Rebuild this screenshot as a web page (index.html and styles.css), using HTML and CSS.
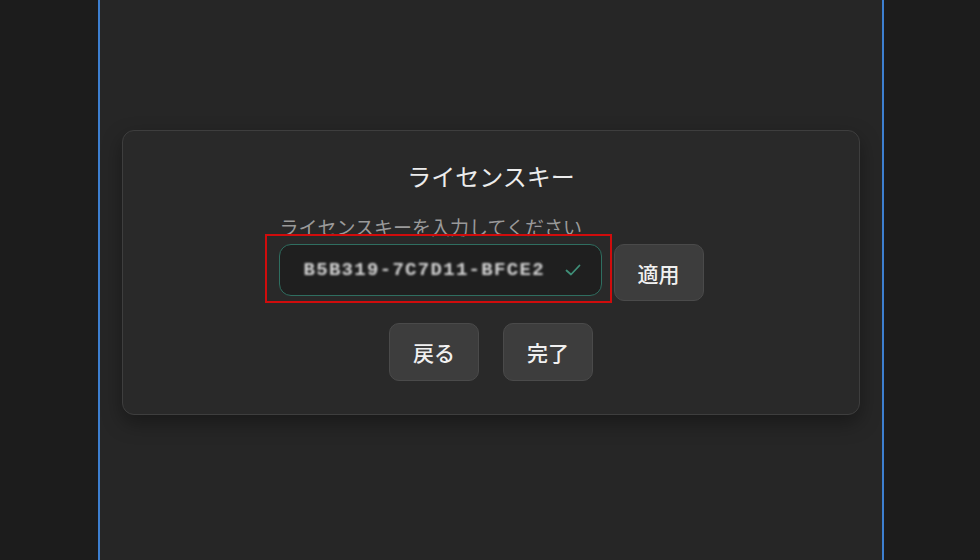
FILE: index.html
```html
<!DOCTYPE html>
<html lang="ja">
<head>
    <meta charset="UTF-8">
    <meta name="viewport" content="width=device-width, initial-scale=1.0">
    <title>ライセンスキー</title>
    <link rel="stylesheet" href="styles.css">
</head>
<body>
    <div class="gutter"></div>
    <main class="panel">
        <section class="dialog">
            <h2 class="dialog-title">ライセンスキー</h2>

            <div class="key-form">
                <label class="key-label" for="licenseKey">ライセンスキーを入力してください</label>
                <div class="key-row">
                    <div class="key-field highlight">
                        <span id="licenseKey" class="key-value">B5B319-7C7D11-BFCE2</span>
                        <svg class="key-check" width="18" height="18" viewBox="0 0 18 18" fill="none">
                            <path d="M2.5 9.5 L7 13.5 L15.5 4.5" stroke="currentColor" stroke-width="1.8" stroke-linecap="round" stroke-linejoin="round"/>
                        </svg>
                    </div>
                    <button class="btn btn-apply">適用</button>
                </div>
            </div>

            <div class="actions">
                <button class="btn">戻る</button>
                <button class="btn">完了</button>
            </div>
        </section>
    </main>
    <div class="gutter gutter-right"></div>
</body>
</html>
```

FILE: styles.css
```css
body {
    margin: 0;
    height: 560px;
    display: flex;
    background-color: #1c1c1c;
    font-family: "Noto Sans CJK JP", "Noto Sans", sans-serif;
    color: #e6e6e6;
    overflow: hidden;
}
.gutter {
    width: 98px;
    flex-shrink: 0;
}
.gutter-right {
    width: 96px;
}
.panel {
    flex: 1;
    background-color: #262626;
    border-left: 2px solid #3d7fd0;
    border-right: 2px solid #3d7fd0;
    padding: 130px 22px 0 22px;
}
.dialog {
    background-color: #292929;
    border: 1px solid #3e3e3e;
    border-radius: 12px;
    box-shadow: 0 8px 20px rgba(0, 0, 0, 0.35);
    padding: 28px 0 33px;
    display: flex;
    flex-direction: column;
    align-items: center;
}
.dialog-title {
    margin: 0;
    font-size: 24px;
    font-weight: 400;
    line-height: 34px;
    color: #ececec;
}
.key-form {
    margin-top: 23px;
    display: flex;
    flex-direction: column;
}
.key-label {
    font-size: 19px;
    line-height: 22px;
    color: #9a9a9a;
    margin: 0 0 6px 1px;
    white-space: nowrap;
}
.key-row {
    display: flex;
    align-items: flex-start;
    gap: 12px;
}
.key-field {
    position: relative;
    width: 323px;
    height: 52px;
    box-sizing: border-box;
    border: 1px solid #2f6e60;
    border-radius: 12px;
    background-color: #1f1f1f;
    display: flex;
    align-items: center;
    padding: 0 19px 0 24px;
}
/* red annotation frame around the field */
.highlight::after {
    content: "";
    position: absolute;
    top: -11px;
    left: -15px;
    right: -11px;
    bottom: -8px;
    border: 2px solid #d00c0c;
}
.key-value {
    flex: 1;
    font-family: "Liberation Mono", monospace;
    font-weight: bold;
    font-size: 19px;
    letter-spacing: 1.3px;
    color: #d4d4d4;
    filter: blur(0.9px);
}
.key-check {
    color: #3f8f78;
    flex-shrink: 0;
}
.btn {
    font-family: "Noto Sans CJK JP", "Noto Sans", sans-serif;
    font-size: 21px;
    font-weight: 500;
    color: #f0f0f0;
    background-color: #3d3d3d;
    border: 1px solid #4a4a4a;
    border-radius: 10px;
    width: 90px;
    height: 58px;
    padding: 0;
}
.btn-apply {
    height: 57px;
}
.actions {
    margin-top: 22px;
    display: flex;
    gap: 24px;
}
```
